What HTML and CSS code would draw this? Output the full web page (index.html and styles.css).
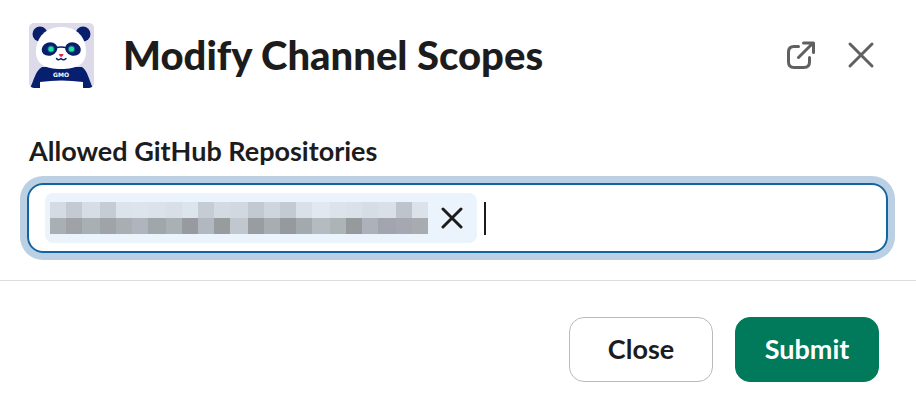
FILE: index.html
```html
<!DOCTYPE html>
<html lang="en">
<head>
  <meta charset="UTF-8">
  <meta name="viewport" content="width=device-width, initial-scale=1.0">
  <title>Modify Channel Scopes</title>
  <link rel="stylesheet" href="styles.css">
</head>
<body>
  <form class="modal">
    <header class="modal-header">
      <svg class="app-icon" viewBox="0 0 65 65" aria-hidden="true">
        <clipPath id="iconShape"><rect width="65" height="65" rx="5"/></clipPath>
        <g clip-path="url(#iconShape)">
          <rect width="65" height="65" fill="#dddaea"/>
          <circle cx="11" cy="11" r="7.5" fill="#0a1f6b"/>
          <circle cx="54" cy="11" r="7.5" fill="#0a1f6b"/>
          <path d="M1 65 C5 58 6 48 13 44 H53 C59 48 60 58 64 65 Z" fill="#06206f"/>
          <path d="M11 65 V59 Q32 56 54 59 V65 Z" fill="#fff"/>
          <path d="M32 4 C48 4 57 14 57 29 C57 41 48 46 32 46 C16 46 7 41 7 29 C7 14 17 4 32 4 Z" fill="#fff"/>
          <ellipse cx="20.5" cy="26" rx="8" ry="6.6" fill="#0a1f6b" transform="rotate(-20 20.5 26)"/>
          <ellipse cx="44" cy="26" rx="8" ry="6.6" fill="#0a1f6b" transform="rotate(20 44 26)"/>
          <path d="M26 25 Q32 23 38 25" fill="none" stroke="#0a1f6b" stroke-width="1.3"/>
          <circle cx="22" cy="26" r="3.6" fill="#1b5f7c"/>
          <circle cx="42.5" cy="26" r="3.6" fill="#1b5f7c"/>
          <circle cx="22" cy="26" r="2.6" fill="#18e6a0"/>
          <circle cx="42.5" cy="26" r="2.6" fill="#18e6a0"/>
          <path d="M30 31 H34.5 Q34 34 32.2 34 Q30.4 34 30 31 Z" fill="#e5214f"/>
          <path d="M27.5 35.5 Q29.5 38 32 35.5 Q34.5 38 37 35.5" fill="none" stroke="#0a1f6b" stroke-width="1.5" stroke-linecap="round"/>
          <text class="app-icon-text" x="32" y="54" text-anchor="middle">GMO</text>
        </g>
      </svg>
      <h1 class="modal-title">Modify Channel Scopes</h1>
      <button class="icon-button" type="button" aria-label="Open in new window">
        <svg width="30" height="30" viewBox="0 0 30 30">
          <path d="M12.5 5.5 H8 Q2.5 5.5 2.5 11 V21 Q2.5 26.5 8 26.5 H18 Q23.5 26.5 23.5 21 V16.5 M12.5 16.5 L27 2 M17.5 2 H27.5 V11.5"/>
        </svg>
      </button>
      <button class="icon-button" type="button" aria-label="Close dialog">
        <svg width="30" height="30" viewBox="0 0 30 30">
          <path d="M4 3 L26 25 M26 3 L4 25"/>
        </svg>
      </button>
    </header>

    <div class="modal-body">
      <label class="field-label" for="repositories">Allowed GitHub Repositories</label>
      <div class="token-field">
        <span class="token">
          <svg class="redacted" width="378" height="32" viewBox="0 0 378 32" shape-rendering="crispEdges" role="img" aria-label="Hidden repository name">
            <g id="mosaic"></g>
          </svg>
          <button class="token-remove" type="button" aria-label="Remove repository">
            <svg width="22" height="22" viewBox="0 0 22 22">
              <path d="M2 2 L20 20 M20 2 L2 20"/>
            </svg>
          </button>
        </span>
        <span class="caret"></span>
        <input class="token-input" id="repositories" type="text" autocomplete="off">
      </div>
    </div>

    <footer class="modal-footer">
      <button class="button" type="button">Close</button>
      <button class="button button-primary" type="submit">Submit</button>
    </footer>
  </form>

  <script src="script.js"></script>
</body>
</html>
```
FILE: styles.css
```css
* {
  box-sizing: border-box;
}

body {
  margin: 0;
  background-color: #fff;
  color: #1d1c1d;
  font-family: Lato, sans-serif;
}

.modal-header {
  display: flex;
  align-items: center;
  padding: 23px 40px 0 29px;
}

.app-icon {
  width: 65px;
  height: 65px;
  flex: none;
}

.app-icon-text {
  fill: #fff;
  font-family: "DejaVu Sans", sans-serif;
  font-size: 6px;
  font-weight: 700;
}

.modal-title {
  flex: 1;
  margin: 0 0 0 29px;
  padding-bottom: 2px;
  font-family: "Lato Black", Lato, sans-serif;
  font-size: 40px;
  font-weight: 900;
  line-height: 48px;
}

.icon-button {
  display: flex;
  margin-left: 30px;
  padding: 0;
  background: none;
  border: none;
  cursor: pointer;
}

.icon-button svg,
.token-remove svg {
  fill: none;
  stroke: #616061;
  stroke-width: 3;
  stroke-linecap: round;
  stroke-linejoin: round;
}

.modal-body {
  padding: 47px 28px 27px 27px;
}

.field-label {
  display: block;
  margin-bottom: 16px;
  padding-left: 2px;
  font-size: 27px;
  font-weight: 700;
  line-height: 32px;
}

.token-field {
  display: flex;
  align-items: center;
  padding: 8px 16px;
  border: 2px solid #1264a3;
  border-radius: 16px;
  box-shadow: 0 0 0 7px #bbd0e3;
}

.token {
  display: flex;
  align-items: center;
  padding: 9px 14px 9px 5px;
  background-color: #ebf4fc;
  border-radius: 8px;
}

.token-remove {
  display: flex;
  margin-left: 13px;
  padding: 0;
  background: none;
  border: none;
  cursor: pointer;
}

.token-remove svg {
  stroke: #1d1c1d;
}

.caret {
  width: 2px;
  height: 33px;
  margin-left: 7px;
  background-color: #1d1c1d;
}

.token-input {
  flex: 1;
  min-width: 0;
  padding: 0;
  border: none;
  outline: none;
  background: none;
  font: inherit;
  font-size: 27px;
}

.modal-footer {
  display: flex;
  justify-content: flex-end;
  gap: 22px;
  padding: 36px 37px 22px;
  border-top: 1px solid #dddddd;
}

.button {
  min-width: 144px;
  height: 65px;
  padding: 0 28px 2px;
  background-color: #fff;
  border: 1px solid #bbbabb;
  border-radius: 15px;
  color: #1d1c1d;
  font-family: inherit;
  font-size: 27px;
  font-weight: 700;
  cursor: pointer;
}

.button-primary {
  background-color: #007a5a;
  border-color: #007a5a;
  color: #fff;
}
```
FILE: script.js
```js
const edges = [0, 16, 32, 50, 66, 82, 98, 116, 132, 148, 164, 180, 198, 214, 230, 246, 262, 280, 296, 312, 328, 346, 362, 378];

const rows = [
  ["#d4dbe3", "#c3cad2", "#d6dde5", "#c5ccd4", "#dce3eb", "#dde4ec", "#dbe2ea", "#d8dfe6", "#dce5ec", "#c5ccd4", "#d3dae2", "#d1d8df",
   "#c3c9d1", "#ced5dd", "#c3cad2", "#d9e0e8", "#e1e8f0", "#dce3eb", "#dae1e9", "#d6dde5", "#d9e0e8", "#bdc4cb", "#dbe2ea"],
  ["#a9b0b3", "#9fa3a7", "#a9b0b3", "#a0a4a8", "#a8aeb2", "#b0b4be", "#a0a7aa", "#aab1b4", "#979b9f", "#b2b8c0", "#989c9f", "#c1c7cf",
   "#999da1", "#a7adb0", "#969a9e", "#a3aaad", "#b4bbc1", "#adb4b6", "#969a9d", "#adb1ba", "#a2a5af", "#a5a8b1", "#a8acb0"]
];

const mosaic = document.getElementById("mosaic");

rows.forEach(function(colors, row) {
  colors.forEach(function(color, i) {
    const rect = document.createElementNS("http://www.w3.org/2000/svg", "rect");
    rect.setAttribute("x", edges[i]);
    rect.setAttribute("y", row * 16);
    rect.setAttribute("width", edges[i + 1] - edges[i]);
    rect.setAttribute("height", 16);
    rect.setAttribute("fill", color);
    mosaic.appendChild(rect);
  });
});
```
